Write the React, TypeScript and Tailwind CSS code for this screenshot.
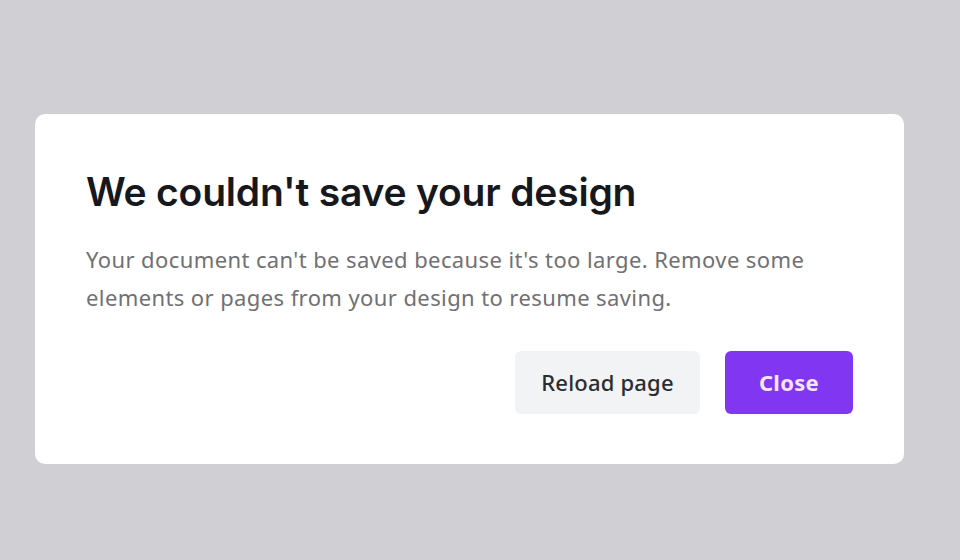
export default function App() {
  return (
    <div className="w-[960px] h-[560px] bg-[#cfcfd4] pt-[114px] pl-[35px] overflow-hidden">
      <div className="w-[869px] h-[350px] bg-white rounded-[10px] px-[51px] pt-[52px] flex flex-col">
        <h1
          className="text-[39px] leading-[52px] font-semibold text-[#16181d] tracking-[-0.2px]"
          style={{ fontFamily: "Inter, 'Noto Sans', sans-serif" }}
        >
          We couldn't save your design
        </h1>
        <p
          className="mt-[22px] text-[22px] leading-[38px] text-[#707075] tracking-[0.4px]"
          style={{ fontFamily: "'Noto Sans', 'Open Sans', sans-serif" }}
        >
          Your document can't be saved because it's too large. Remove some
          <br />
          elements or pages from your design to resume saving.
        </p>
        <div
          className="mt-auto mb-[50px] flex justify-end gap-[25px]"
          style={{ fontFamily: "'Noto Sans', 'Open Sans', sans-serif" }}
        >
          <button className="w-[185px] h-[63px] rounded-[6px] bg-[#f1f3f5] text-[22px] font-medium text-[#2b2d31] tracking-[0.2px]">
            Reload page
          </button>
          <button className="w-[128px] h-[63px] rounded-[6px] bg-[#8136f2] text-[22px] font-bold text-[#f3e7ff] tracking-[0.3px]">
            Close
          </button>
        </div>
      </div>
    </div>
  );
}
